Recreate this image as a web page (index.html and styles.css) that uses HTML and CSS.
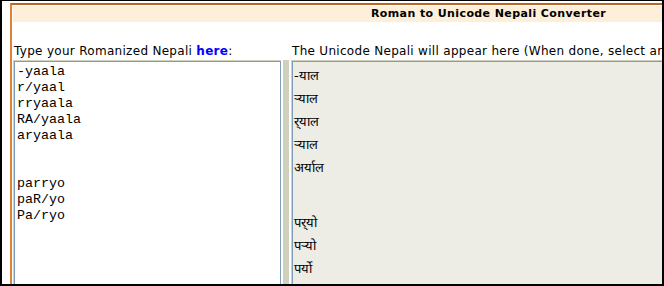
FILE: index.html
```html
<!doctype html>
<html>
  <head>
    <meta http-equiv="content-type" content="text/html; charset=UTF-8">
    <title>Roman to Unicode Nepali Converter</title>
    <link rel="stylesheet" href="styles.css">
  </head>

  <body>
    <div class="frame">
      <div class="page">
        <div class="titleBar">Roman to Unicode Nepali Converter</div>

        <div class="labels">
          <div class="leftLabel">Type your Romanized Nepali <a href="#">here</a>:</div>
          <div class="rightLabel">The Unicode Nepali will appear here (When done, select and copy the text)</div>
        </div>

        <div class="panes">
          <div class="inputPane"><div class="inputText">-yaala
r/yaal
rryaala
RA/yaala
aryaala


parryo
paR/yo
Pa/ryo</div></div>
          <div class="divider"></div>
          <div class="outputPane">
            <div class="line">-याल</div>
            <div class="line">र्‍याल</div>
            <div class="line">र्‌याल</div>
            <div class="line">र्‍याल</div>
            <div class="line">अर्याल</div>
            <div class="blank"></div>
            <div class="blank"></div>
            <div class="line">पर्‌यो</div>
            <div class="line">पर्‍यो</div>
            <div class="line">पर्यो</div>
          </div>
        </div>
      </div>
    </div>
  </body>
</html>
```

FILE: styles.css
```css
body {
  margin: 0;
  background: #000;
}

.frame {
  width: 664px;
  height: 286px;
  box-sizing: border-box;
  border: 2px solid #000;
  border-top-width: 1px;
  background: #fff;
  overflow: hidden;
}

.page {
  margin: 2px 0 0 8px;
  width: 1000px;
  height: 320px;
  border-left: 2px solid #e0822f;
  border-top: 2px solid #b4682a;
  padding: 1px 0 0 1px;
  font-family: "DejaVu Sans", Verdana, sans-serif;
  font-size: 12px;
  color: #000;
}

.titleBar {
  width: 951px;
  height: 16px;
  line-height: 16px;
  background-color: #fdefd9;
  text-align: center;
  font-weight: bold;
  font-size: 11px;
  letter-spacing: 0.4px;
}

.labels {
  display: flex;
  margin-top: 21px;
  height: 17px;
  line-height: 16px;
  white-space: nowrap;
  letter-spacing: 0.3px;
}

.leftLabel {
  width: 277px;
  padding-left: 1px;
}

.leftLabel a {
  color: #0000ff;
  font-weight: bold;
  text-decoration: none;
}

.rightLabel {
  padding-left: 1px;
}

.panes {
  display: flex;
  height: 240px;
}

.inputPane {
  width: 268px;
  box-sizing: border-box;
  border-top: 1px solid #d0d0bf;
  border-left: 1px solid #d0d0bf;
}

.inputText {
  height: 100%;
  box-sizing: border-box;
  border: 1px solid #7f9db9;
  padding: 2px 2px;
  background: #fff;
  white-space: pre;
  font-family: "Liberation Mono", "Courier New", monospace;
  font-size: 13.333px;
  line-height: 16px;
}

.divider {
  width: 6px;
  margin: 0 2px;
  background-color: #d0d0bf;
}

.outputPane {
  flex: 1;
  border-top: 1px solid #d0d0bf;
  border-left: 1px solid #d0d0bf;
  box-shadow: inset 1px 1px 0 #7f9db9;
  background-color: #eeede5;
  padding: 3px 0 0 2px;
  font-size: 13px;
}

.line {
  height: 23px;
  line-height: 23px;
}

.blank {
  height: 16px;
}
```
